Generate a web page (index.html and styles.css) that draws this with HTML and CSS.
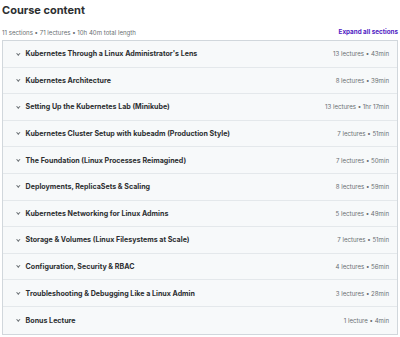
FILE: index.html
```html
<!DOCTYPE html>
<html lang="en">
<head>
  <meta charset="UTF-8">
  <meta name="viewport" content="width=device-width, initial-scale=1.0">
  <title>Course content</title>
  <link rel="stylesheet" href="styles.css">
</head>
<body>

  <!-- Course Content -->
  <div class="course-content">
    <h2 class="title">Course content</h2>
    <div class="summary">
      <span class="stats">11 sections • 71 lectures • 10h 40m total length</span>
      <button class="expand-btn">Expand all sections</button>
    </div>

    <div class="sections">
      <div class="section"><span class="chevron"></span><span class="name">Kubernetes Through a Linux Administrator's Lens</span><span class="meta">13 lectures • 43min</span></div>
      <div class="section"><span class="chevron"></span><span class="name">Kubernetes Architecture</span><span class="meta">8 lectures • 39min</span></div>
      <div class="section"><span class="chevron"></span><span class="name">Setting Up the Kubernetes Lab (Minikube)</span><span class="meta">13 lectures • 1hr 17min</span></div>
      <div class="section"><span class="chevron"></span><span class="name">Kubernetes Cluster Setup with kubeadm (Production Style)</span><span class="meta">7 lectures • 51min</span></div>
      <div class="section"><span class="chevron"></span><span class="name">The Foundation (Linux Processes Reimagined)</span><span class="meta">7 lectures • 50min</span></div>
      <div class="section"><span class="chevron"></span><span class="name">Deployments, ReplicaSets &amp; Scaling</span><span class="meta">8 lectures • 59min</span></div>
      <div class="section"><span class="chevron"></span><span class="name">Kubernetes Networking for Linux Admins</span><span class="meta">5 lectures • 49min</span></div>
      <div class="section"><span class="chevron"></span><span class="name">Storage &amp; Volumes (Linux Filesystems at Scale)</span><span class="meta">7 lectures • 51min</span></div>
      <div class="section"><span class="chevron"></span><span class="name">Configuration, Security &amp; RBAC</span><span class="meta">4 lectures • 56min</span></div>
      <div class="section"><span class="chevron"></span><span class="name">Troubleshooting &amp; Debugging Like a Linux Admin</span><span class="meta">3 lectures • 28min</span></div>
      <div class="section"><span class="chevron"></span><span class="name">Bonus Lecture</span><span class="meta">1 lecture • 4min</span></div>
    </div>
  </div>

</body>
</html>
```

FILE: styles.css
```css
/* Basic Reset */
* {
  margin: 0;
  padding: 0;
  box-sizing: border-box;
}

body {
  background-color: #fff;
  font-family: 'Inter', sans-serif;
  color: #2d2f31;
}

/* Container */
.course-content {
  padding: 2px 2px 0 2px;
}

.title {
  font-size: 11px;
  font-weight: 700;
  line-height: 16px;
}

/* Summary line */
.summary {
  display: flex;
  justify-content: space-between;
  align-items: center;
  margin-top: 9px;
  height: 10px;
  font-size: 6.1px;
  color: #6a6f73;
}

.expand-btn {
  border: none;
  background: none;
  color: #5022c3;
  font-family: inherit;
  font-size: 6.3px;
  font-weight: 700;
  cursor: pointer;
}

/* Sections */
.sections {
  margin-top: 3px;
  border: 1px solid #d1d7dc;
}

.section {
  display: flex;
  align-items: center;
  height: 26.6px;
  padding: 0 8px 0 14px;
  background-color: #f7f9fa;
  border-bottom: 1px solid #e4e8eb;
}

.section:last-child {
  border-bottom: none;
}

.chevron {
  width: 2.6px;
  height: 2.6px;
  margin-right: 6px;
  border-right: 0.7px solid #6a6f73;
  border-bottom: 0.7px solid #6a6f73;
  transform: translateY(-1px) rotate(45deg);
}

.name {
  flex: 1;
  font-size: 7.1px;
  font-weight: 700;
}

.meta {
  font-size: 6.1px;
  color: #6a6f73;
}
```
